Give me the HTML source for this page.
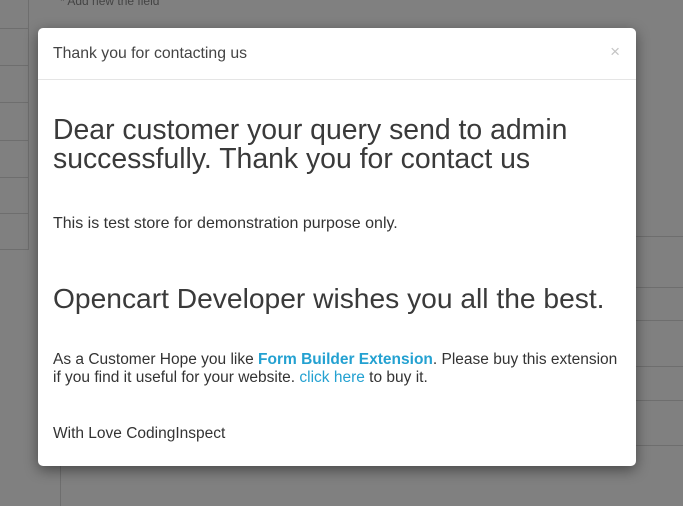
<!DOCTYPE html>
<html><head><style>
body{margin:0;width:683px;height:506px;background:#808080;position:relative;overflow:hidden;font-family:"Liberation Sans",sans-serif;color:#333}
.h{position:absolute;height:1px;background:#6e6e6e}
.v{position:absolute;width:1px;background:#6e6e6e}
.modal{position:absolute;left:38px;top:28px;width:598px;height:438px;background:#fff;border-radius:5px;box-shadow:0 4px 14px rgba(0,0,0,.45)}
.hd{height:51px;border-bottom:1px solid #e5e5e5;position:relative}
.hd span{position:absolute;left:15px;top:17px;font-size:15.8px;color:#444}
.x{position:absolute;right:16px;top:14px;font-size:17px;color:#c4c4c4}
.t{position:absolute;left:15px;white-space:nowrap}
a{color:#23a1d1;text-decoration:none}
</style></head><body>
<div class="v" style="left:28px;top:0;height:250px"></div>
<div class="h" style="left:0;top:28px;width:28px"></div>
<div class="h" style="left:0;top:65px;width:28px"></div>
<div class="h" style="left:0;top:102px;width:28px"></div>
<div class="h" style="left:0;top:140px;width:28px"></div>
<div class="h" style="left:0;top:177px;width:28px"></div>
<div class="h" style="left:0;top:213px;width:28px"></div>
<div class="h" style="left:0;top:249px;width:28px"></div>
<div class="v" style="left:60px;top:440px;height:66px"></div>
<div class="h" style="left:636px;top:236px;width:47px"></div>
<div class="h" style="left:636px;top:287px;width:47px"></div>
<div class="h" style="left:636px;top:320px;width:47px"></div>
<div class="h" style="left:636px;top:366px;width:47px"></div>
<div class="h" style="left:636px;top:400px;width:47px"></div>
<div class="h" style="left:636px;top:445px;width:47px"></div>
<div style="position:absolute;left:60px;top:-6px;font-size:12px;color:#444">* Add new the field</div>
<div class="modal">
<div class="hd"><span>Thank you for contacting us</span><div class="x">×</div></div>
<div class="t" style="top:88px;font-size:28.4px;line-height:29px;color:#3a3a3a">Dear customer your query send to admin<br>successfully. Thank you for contact us</div>
<div class="t" style="top:187px;font-size:16px">This is test store for demonstration purpose only.</div>
<div class="t" style="top:254px;font-size:28.2px;color:#3a3a3a">Opencart Developer wishes you all the best.</div>
<div class="t" style="top:323px;font-size:15.5px;line-height:18px">As a Customer Hope you like <a href="#"><b>Form Builder Extension</b></a>. Please buy this extension<br>if you find it useful for your website. <a href="#">click here</a> to buy it.</div>
<div class="t" style="top:397px;font-size:15.5px">With Love CodingInspect</div>
</div>
</body></html>
